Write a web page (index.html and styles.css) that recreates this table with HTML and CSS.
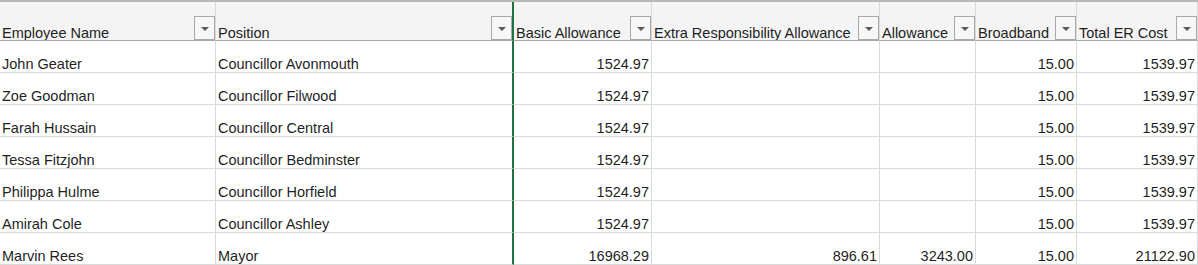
FILE: index.html
```html
<!DOCTYPE html>
<html>
<head>
<meta charset="utf-8">
<link rel="stylesheet" href="styles.css">
</head>
<body>
<div class="sheet">
  <div class="hd"><span>Employee Name</span><span class="dd"></span></div>
  <div class="hd frz"><span>Position</span><span class="dd"></span></div>
  <div class="hd"><span>Basic Allowance</span><span class="dd"></span></div>
  <div class="hd"><span>Extra Responsibility Allowance</span><span class="dd"></span></div>
  <div class="hd"><span>Allowance</span><span class="dd"></span></div>
  <div class="hd"><span>Broadband</span><span class="dd"></span></div>
  <div class="hd"><span>Total ER Cost</span><span class="dd"></span></div>

  <div class="c">John Geater</div><div class="c frz">Councillor Avonmouth</div><div class="c n">1524.97</div><div class="c n"></div><div class="c n"></div><div class="c n">15.00</div><div class="c n">1539.97</div>
  <div class="c">Zoe Goodman</div><div class="c frz">Councillor Filwood</div><div class="c n">1524.97</div><div class="c n"></div><div class="c n"></div><div class="c n">15.00</div><div class="c n">1539.97</div>
  <div class="c">Farah Hussain</div><div class="c frz">Councillor Central</div><div class="c n">1524.97</div><div class="c n"></div><div class="c n"></div><div class="c n">15.00</div><div class="c n">1539.97</div>
  <div class="c">Tessa Fitzjohn</div><div class="c frz">Councillor Bedminster</div><div class="c n">1524.97</div><div class="c n"></div><div class="c n"></div><div class="c n">15.00</div><div class="c n">1539.97</div>
  <div class="c">Philippa Hulme</div><div class="c frz">Councillor Horfield</div><div class="c n">1524.97</div><div class="c n"></div><div class="c n"></div><div class="c n">15.00</div><div class="c n">1539.97</div>
  <div class="c">Amirah Cole</div><div class="c frz">Councillor Ashley</div><div class="c n">1524.97</div><div class="c n"></div><div class="c n"></div><div class="c n">15.00</div><div class="c n">1539.97</div>
  <div class="c">Marvin Rees</div><div class="c frz">Mayor</div><div class="c n">16968.29</div><div class="c n">896.61</div><div class="c n">3243.00</div><div class="c n">15.00</div><div class="c n">21122.90</div>
</div>
</body>
</html>
```

FILE: styles.css
```css
html, body {
  margin: 0;
  padding: 0;
  background: #ffffff;
}

.sheet {
  display: grid;
  grid-template-columns: 216px 298px 138px 228px 96px 101px 121px;
  width: 1198px;
  font-family: "Liberation Sans", Arial, sans-serif;
  font-size: 14.5px;
  color: #1f1f1f;
  border-top: 2px solid #b8b8b8;
  box-sizing: border-box;
  overflow: hidden;
}

.hd {
  box-sizing: border-box;
  height: 39px;
  background: #f4f4f4;
  border-right: 1px solid #dadada;
  border-bottom: 1px solid #a8a8a8;
  display: flex;
  align-items: flex-end;
  justify-content: space-between;
  padding-left: 2px;
  white-space: nowrap;
  overflow: hidden;
}

.hd span:first-child {
  line-height: 14px;
}

.dd {
  flex: none;
  box-sizing: border-box;
  width: 21px;
  height: 24px;
  border: 1px solid #a9a9a9;
  background: #f7f7f7;
  display: flex;
  align-items: center;
  justify-content: center;
  margin-left: 2px;
}

.dd::after {
  content: "";
  width: 0;
  height: 0;
  border-left: 4px solid transparent;
  border-right: 4px solid transparent;
  border-top: 4px solid #5a5a5a;
  margin-top: 1px;
}

.c {
  box-sizing: border-box;
  height: 32px;
  border-right: 1px solid #dadada;
  border-bottom: 1px solid #dadada;
  display: flex;
  align-items: flex-end;
  padding: 0 2px;
  line-height: 15px;
  white-space: nowrap;
  overflow: hidden;
}

.c.n {
  justify-content: flex-end;
  padding-right: 2px;
}

.frz {
  border-right: 2px solid #1e7145;
}
```
